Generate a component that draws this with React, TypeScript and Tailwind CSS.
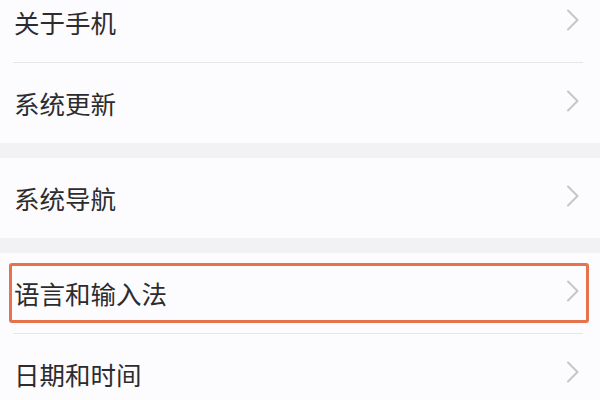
import React from "react";

function Chevron() {
  return (
    <svg width="14" height="22" viewBox="0 0 14 22" fill="none" className="shrink-0 -translate-y-[2px]">
      <polyline points="2,1.5 11.5,11 2,20.5" stroke="#c6c6c8" strokeWidth="2" strokeLinecap="round" strokeLinejoin="round" />
    </svg>
  );
}

function Row({ label, highlight }: { label: string; highlight?: boolean }) {
  return (
    <div className="relative flex h-[80px] items-center justify-between pl-[14px] pr-[20px]">
      <span className="text-[25.5px] leading-none text-[#2c2c2e]">{label}</span>
      <Chevron />
      {highlight && (
        <div className="pointer-events-none absolute left-[9px] right-[11px] top-[10px] bottom-[10px] rounded-[3px] border-[3px] border-[#e5744c]" />
      )}
    </div>
  );
}

function Divider() {
  return <div className="ml-[13px] mr-[17px] h-px bg-[#e6e5e8]" />;
}

function Band() {
  return <div className="h-[15px] bg-[#f2f1f4]" />;
}

export default function App() {
  return (
    <div
      className="h-[400px] w-[600px] overflow-hidden bg-[#fcfbfd]"
      style={{ fontFamily: '"Noto Sans CJK SC", "Noto Sans", sans-serif' }}
    >
      <div className="-mt-[18px]">
        <Row label="关于手机" />
        <Divider />
        <Row label="系统更新" />
        <Band />
        <Row label="系统导航" />
        <Band />
        <Row label="语言和输入法" highlight />
        <Divider />
        <Row label="日期和时间" />
      </div>
    </div>
  );
}
